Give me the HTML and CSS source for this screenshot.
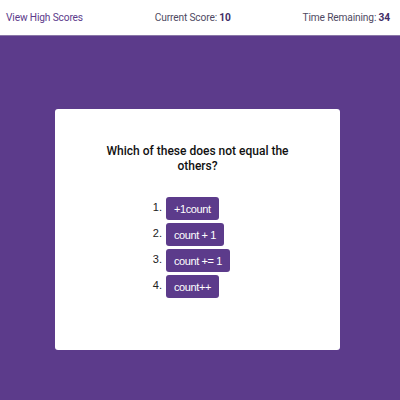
FILE: index.html
```html
<!DOCTYPE html>
<html>
<head>
<meta charset="utf-8">
<link rel="stylesheet" href="styles.css">
</head>
<body>
<header class="topbar">
  <a class="scores-link" href="#">View High Scores</a>
  <div class="stat">Current Score: <b>10</b></div>
  <div class="stat">Time Remaining: <b>34</b></div>
</header>
<main class="stage">
  <section class="card">
    <h2 class="question">Which of these does not equal the others?</h2>
    <ol class="answers">
      <li><button class="answer">+1count</button></li>
      <li><button class="answer">count + 1</button></li>
      <li><button class="answer">count += 1</button></li>
      <li><button class="answer">count++</button></li>
    </ol>
  </section>
</main>
</body>
</html>
```

FILE: styles.css
```css
* { box-sizing: border-box; }
html, body { margin: 0; padding: 0; }
body {
  width: 400px;
  height: 400px;
  background: #5c3b8b;
  font-family: Roboto, "Liberation Sans", sans-serif;
  overflow: hidden;
}
.topbar {
  height: 36px;
  background: #fff;
  display: flex;
  justify-content: space-between;
  align-items: center;
  padding: 0 10px 0 6px;
  font-size: 10.2px;
  letter-spacing: -0.15px;
  border-bottom: 1px solid #8a77a8;
}
.scores-link {
  color: #5c3b8b;
  text-decoration: none;
}
.stat {
  color: #4f4a63;
}
.stat b {
  color: #3f2d66;
  font-weight: 700;
}
.stage {
  padding: 73px 60px 0 55px;
}
.card {
  width: 285px;
  height: 241px;
  background: #fff;
  border-radius: 3px;
  padding: 35px 20px 0;
  display: flex;
  flex-direction: column;
  align-items: center;
}
.question {
  margin: 0;
  width: 220px;
  text-align: center;
  font-size: 12px;
  line-height: 15px;
  font-weight: 500;
  color: #111;
}
.answers {
  margin: 23px 0 0 63px;
  padding: 0 0 0 27px;
  align-self: flex-start;
  font-family: "Liberation Sans", Arial, sans-serif;
  font-size: 11px;
  color: #222;
}
.answers li {
  margin-bottom: 3px;
  padding-left: 1px;
}
.answer {
  height: 23px;
  padding: 0 8px;
  background: #5c3b8b;
  color: #fff;
  border: none;
  border-radius: 3px;
  font-family: "Liberation Sans", Arial, sans-serif;
  font-size: 11px;
  letter-spacing: -0.4px;
  vertical-align: middle;
}
```
